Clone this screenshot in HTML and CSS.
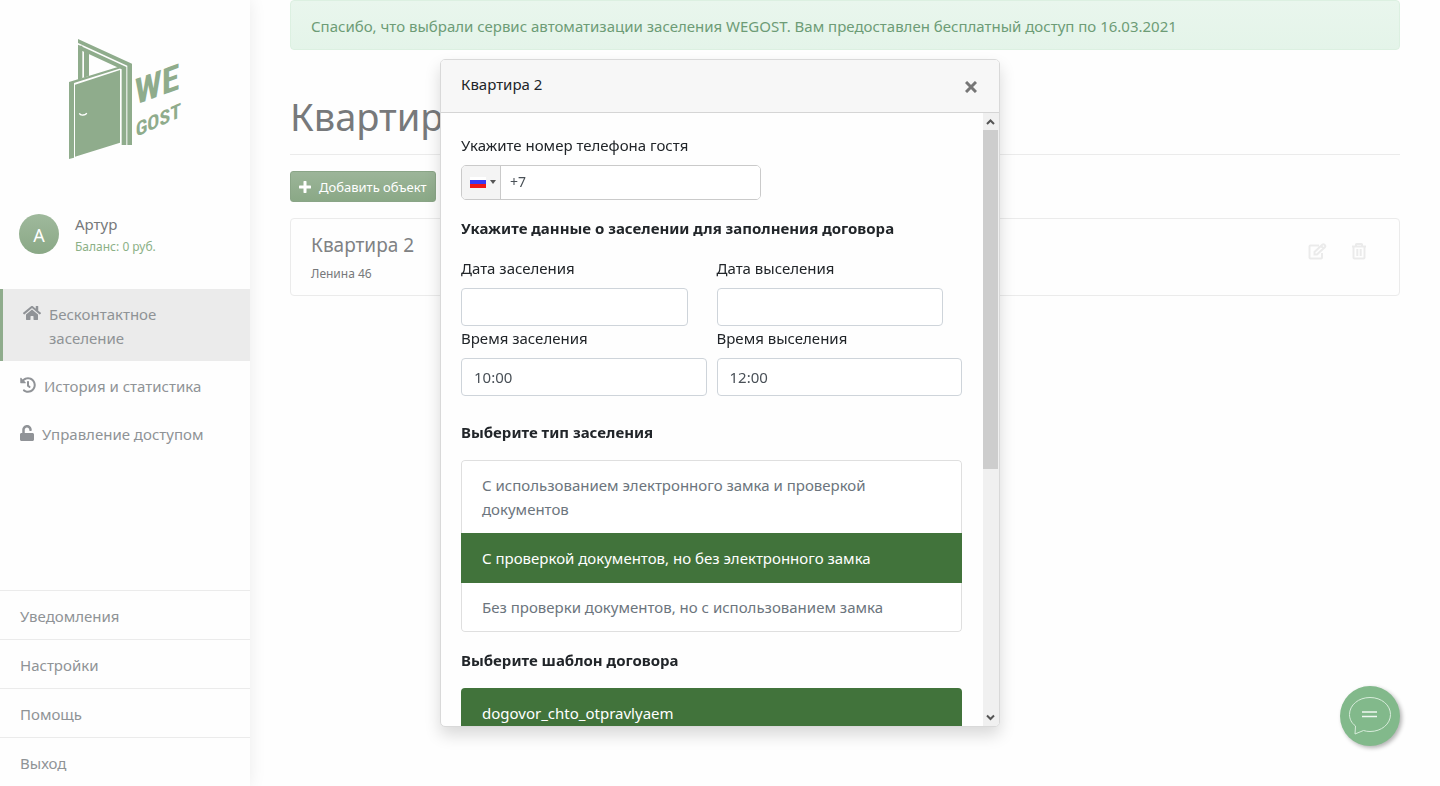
FILE: index.html
```html
<!DOCTYPE html>
<html lang="ru">
<head>
<meta charset="utf-8">
<meta name="viewport" content="width=device-width, initial-scale=1">
<title>WEGOST</title>
<link rel="stylesheet" href="styles.css">
</head>
<body>
<div class="app">
  <aside class="sidebar">
    <svg class="logo" viewBox="54 39 345 366" role="img" aria-label="WE GOST">
      <g class="logo-shape">
        <path d="M84 42 246 116V360H232V122L84 54Z"/>
        <path d="M84 59 229 126V360H215V133L84 72Z"/>
        <path d="M84 62H97V160L84 165ZM102 76 117 82V152L102 158Z"/>
        <path d="M57 171 206 125 212 130 72 174V398L57 402Z"/>
        <path d="M75 179 210 135V353L75 395Z"/>
      </g>
      <path class="logo-handle" d="M88 265Q91 271 99 270Q108 270 110 264"/>
      <g class="logo-text">
        <text class="logo-we" transform="translate(254 240) skewY(-20)">WE</text>
        <text class="logo-gost" transform="translate(257 336) skewY(-24)">GOST</text>
      </g>
    </svg>
    <div class="profile">
      <span class="avatar">А</span>
      <div class="profile-info">
        <div class="profile-name">Артур</div>
        <div class="balance">Баланс: 0 руб.</div>
      </div>
    </div>
    <nav class="nav">
      <a class="nav-item active" href="#">
        <svg class="nav-icon" width="18" height="16" viewBox="0 0 576 512"><path d="M280 148 96 300v164c0 9 7 16 16 16l112-1c9 0 16-7 16-15v-96c0-9 7-16 16-16h64c9 0 16 7 16 16v96c0 8 7 16 16 16l112 1c9 0 16-8 16-17V300L296 148c-5-4-11-4-16 0zM572 251l-84-69V44c0-7-5-12-12-12h-56c-7 0-12 5-12 12v72l-90-74c-17-14-43-14-60 0L4 251c-5 4-6 12-1 17l25 31c4 5 12 6 17 2L280 107c5-4 11-4 16 0l235 194c5 4 13 3 17-2l26-31c4-5 3-13-2-17z"/></svg>
        <span>Бесконтактное заселение</span>
      </a>
      <a class="nav-item" href="#">
        <svg class="nav-icon" width="16" height="16" viewBox="0 0 512 512"><path d="M504 255c0 137-111 249-248 249-59 0-114-21-156-56-11-9-12-26-2-36l11-11c9-9 23-10 33-2 31 25 71 40 114 40 101 0 183-82 183-183S357 73 256 73c-48 0-92 19-125 50l51 51c10 10 3 27-11 27H24c-9 0-16-7-16-16V38c0-14 17-21 27-11l50 49C129 34 190 8 256 8c137 0 248 111 248 247zM323 343l10-13c8-10 6-25-4-33l-41-32V152c0-13-11-24-24-24h-16c-13 0-24 11-24 24v144l65 50c11 9 26 7 34-3z"/></svg>
        <span>История и статистика</span>
      </a>
      <a class="nav-item" href="#">
        <svg class="nav-icon" width="14" height="16" viewBox="0 0 448 512"><path d="M400 256H152v-103c0-40 32-73 71-73 40 0 73 32 73 72v16c0 13 11 24 24 24h32c13 0 24-11 24-24v-16C376 68 307 0 223 0S72 70 72 154v102H48c-27 0-48 21-48 48v160c0 27 21 48 48 48h352c26 0 48-21 48-48V304c0-27-22-48-48-48z"/></svg>
        <span>Управление доступом</span>
      </a>
    </nav>
    <nav class="menu">
      <a href="#">Уведомления</a>
      <a href="#">Настройки</a>
      <a href="#">Помощь</a>
      <a href="#">Выход</a>
    </nav>
  </aside>

  <main class="main">
    <div class="alert">Спасибо, что выбрали сервис автоматизации заселения WEGOST. Вам предоставлен бесплатный доступ по 16.03.2021</div>
    <h1 class="title">Квартиры</h1>
    <button class="add" type="button">
      <svg width="12" height="12" viewBox="0 0 12 12"><path d="M6 1V11M1 6H11"/></svg>
      Добавить объект
    </button>
    <article class="card">
      <div>
        <h2 class="card-title">Квартира 2</h2>
        <div class="card-address">Ленина 46</div>
      </div>
      <div class="card-actions">
        <button type="button" aria-label="Изменить"><svg width="19" height="17" viewBox="0 0 19 17"><path d="M11 2.500H2.500Q1.500 2.500 1.500 3.500V14.500Q1.500 15.500 2.500 15.500H13Q14 15.500 14 14.500V10M6.500 11.500V9L14.500 1.500Q15.500 .8 16.500 1.700Q17.800 2.800 17 4L9 11.500ZM13 3 15.500 5.500"/></svg></button>
        <button type="button" aria-label="Удалить"><svg width="14" height="17" viewBox="0 0 14 17"><path d="M0 3.500H14M4 3V1.500Q4 1 4.500 1H9.500Q10 1 10 1.500V3M1.500 4V14.500Q1.500 15.500 2.500 15.500H11.500Q12.500 15.500 12.500 14.500V4M5.300 6V13M8.700 6V13"/></svg></button>
      </div>
    </article>
  </main>
</div>

<div class="overlay">
  <section class="modal" role="dialog" aria-labelledby="modal-title">
    <header class="modal-header">
      <span id="modal-title">Квартира 2</span>
      <button class="close" type="button" aria-label="Закрыть"><svg width="12" height="12" viewBox="0 0 12 12"><path d="M1 1 11 11M11 1 1 11"/></svg></button>
    </header>
    <div class="modal-main">
      <form class="modal-body">
        <label class="label label-phone" for="phone">Укажите номер телефона гостя</label>
        <div class="phone">
          <button class="phone-country" type="button" aria-label="Россия">
            <span class="flag"></span><span class="caret"></span>
          </button>
          <input id="phone" type="tel" value="+7">
        </div>
        <h3 class="section-title">Укажите данные о заселении для заполнения договора</h3>
        <div class="dates">
          <div class="field field-date"><label class="label" for="date-in">Дата заселения</label><input id="date-in" type="text"></div>
          <div class="field field-date"><label class="label" for="date-out">Дата выселения</label><input id="date-out" type="text"></div>
          <div class="field"><label class="label" for="time-in">Время заселения</label><input id="time-in" type="text" value="10:00"></div>
          <div class="field"><label class="label" for="time-out">Время выселения</label><input id="time-out" type="text" value="12:00"></div>
        </div>
        <h3 class="section-title section-type">Выберите тип заселения</h3>
        <div class="list">
          <button class="list-item" type="button">С использованием электронного замка и проверкой документов</button>
          <button class="list-item selected" type="button">С проверкой документов, но без электронного замка</button>
          <button class="list-item" type="button">Без проверки документов, но с использованием замка</button>
        </div>
        <h3 class="section-title">Выберите шаблон договора</h3>
        <div class="list">
          <button class="list-item selected" type="button">dogovor_chto_otpravlyaem</button>
        </div>
      </form>
      <div class="scrollbar" aria-hidden="true">
        <svg class="scroll-arrow" width="15" height="17" viewBox="0 0 15 17"><path d="M4 11 7.500 7.500 11 11"/></svg>
        <div class="scroll-track"><div class="scroll-thumb"></div></div>
        <svg class="scroll-arrow" width="15" height="17" viewBox="0 0 15 17"><path d="M4 6.500 7.500 10 11 6.500"/></svg>
      </div>
    </div>
  </section>
</div>

<button class="chat" type="button" aria-label="Чат">
  <svg width="60" height="60" viewBox="0 0 60 60"><path d="M15.500 40C11.500 37 9.500 33 9.500 28.500C9.500 19 18.500 11.500 30 11.500S50.500 19 50.500 28.500S41.500 45.500 30 45.500Q26.500 45.500 23.500 44.500L15 48Z"/><path class="chat-lines" d="M22 26H37M22 30.500H37"/></svg>
</button>
</body>
</html>
```
FILE: styles.css
```css
* { box-sizing: border-box; }

body {
  margin: 0;
  background: #fefefe;
  color: #212529;
  font-family: "Noto Sans", "Open Sans", sans-serif;
  font-size: 15px;
  line-height: 24px;
}

button, input { font: inherit; color: inherit; }
button { cursor: pointer; }
a { color: inherit; text-decoration: none; }

.app { display: flex; min-height: 100vh; }

/* Sidebar */
.sidebar {
  flex: 0 0 250px;
  height: 100vh;
  display: flex;
  flex-direction: column;
  background: #fefefe;
  box-shadow: 0 0 16px rgba(0, 0, 0, .08);
  color: #8f9396;
}

.logo {
  flex: none;
  width: 115px;
  height: 122px;
  margin: 38px 0 0 68px;
  overflow: visible;
}
.logo-shape, .logo-text { fill: #8fac8c; }
.logo-handle { fill: none; stroke: #fff; stroke-width: 4; }
.logo-text { font-family: "Roboto Condensed", "Open Sans Condensed", "Liberation Sans Narrow", "DejaVu Sans Condensed", sans-serif; font-weight: 700; }
.logo-we { font-size: 108px; }
.logo-gost { font-size: 60px; }

.profile {
  display: flex;
  gap: 16px;
  margin: 52px 0 0 19px;
}
.avatar {
  width: 40px;
  height: 40px;
  margin-top: 2px;
  border-radius: 50%;
  background: linear-gradient(#9fb99c, #8aa886);
  color: #fff;
  font-size: 18px;
  line-height: 42px;
  text-align: center;
}
.profile-name { color: #77797b; }
.balance { color: #8bb086; font-size: 12px; line-height: 22px; }

.nav { margin-top: 31px; }
.nav-item {
  display: flex;
  gap: 8px;
  padding: 13px 40px 11px 20px;
}
.nav-item.active {
  border-left: 3px solid #8fac8c;
  background: #ebebeb;
}
.nav-icon { flex: none; margin-top: 3px; fill: #909397; }

.menu { margin-top: auto; }
.menu a {
  display: block;
  padding: 13px 20px 11px;
  border-top: 1px solid #ebebeb;
}

/* Page content */
.main { flex: 1; min-width: 0; padding: 0 40px; }

.alert {
  padding: 13px 20px 11px;
  border: 1px solid #dcf0e1;
  border-radius: 4px;
  background: linear-gradient(#e9f6ed, #e4f4e9);
  color: #6d9c76;
}

.title {
  margin: 38px 0 16px;
  padding-bottom: 10px;
  border-bottom: 1px solid #ebebeb;
  color: #77797b;
  font-size: 38px;
  font-weight: 400;
  line-height: 56px;
}

.add {
  display: flex;
  align-items: center;
  gap: 8px;
  height: 31px;
  padding: 0 8px;
  border: 1px solid #8aa587;
  border-radius: 3px;
  background: linear-gradient(#9cb599, #8aa886);
  color: #fff;
  font-size: 13px;
}
.add svg { fill: none; stroke: #fff; stroke-width: 3; stroke-linecap: round; }

.card {
  display: flex;
  justify-content: space-between;
  margin-top: 16px;
  padding: 14px 33px 10px 20px;
  border: 1px solid #ebebeb;
  border-radius: 4px;
}
.card-title {
  margin: 0 0 6px;
  color: #808284;
  font-size: 19px;
  font-weight: 400;
  line-height: 24px;
}
.card-address { color: #77797b; font-size: 12px; line-height: 22px; }
.card-actions { display: flex; align-items: flex-start; gap: 25px; padding-top: 10px; }
.card-actions button { display: flex; padding: 0; border: 0; background: none; }
.card-actions svg { fill: none; stroke: #ebebeb; stroke-width: 2; }

/* Dialog */
.overlay {
  position: fixed;
  inset: 0;
  display: flex;
  align-items: center;
  justify-content: center;
}
.modal {
  display: flex;
  flex-direction: column;
  width: 560px;
  max-width: 100%;
  max-height: 85%;
  overflow: hidden;
  border: 1px solid #d9d9d9;
  border-radius: 5px;
  background: #fefefe;
  box-shadow: 0 8px 16px rgba(0, 0, 0, .15);
}
.modal-header {
  display: flex;
  align-items: center;
  justify-content: space-between;
  flex: none;
  padding: 12px 20px 16px;
  border-bottom: 1px solid #d5d5d5;
  background: #f7f7f7;
}
.close { display: flex; margin-top: 6px; padding: 2px; border: 0; background: none; }
.close svg { fill: none; stroke: #767676; stroke-width: 3; }

.modal-main { display: flex; flex: 1; min-height: 0; }
.modal-body {
  flex: 1;
  min-width: 0;
  padding: 20px;
  overflow-y: auto;
  scrollbar-width: none;
}
.label { display: block; margin-bottom: 8px; }

.phone {
  display: flex;
  width: 300px;
  height: 35px;
  border: 1px solid #cacaca;
  border-radius: 5px;
  overflow: hidden;
}
.phone-country {
  display: flex;
  align-items: center;
  gap: 4px;
  width: 39px;
  padding: 0 0 0 8px;
  border: 0;
  border-right: 1px solid #cacaca;
  background: #f4f4f4;
}
.flag {
  width: 16px;
  height: 11px;
  background: linear-gradient(#fff 30%, #3a3af5 30% 65%, #f01818 65%);
}
.caret {
  border: 3px solid transparent;
  border-top: 4px solid #555;
  border-bottom: 0;
}
.phone input {
  flex: 1;
  min-width: 0;
  padding: 0 9px;
  border: 0;
  background: #fff;
  color: #495057;
  font-size: 14px;
}

.section-title {
  margin: 16px 0;
  font-size: 15px;
  font-weight: 700;
  line-height: 24px;
}
.section-type { margin-top: 24px; }
.label-phone { padding-bottom: 0; }

.dates { display: grid; grid-template-columns: 1fr 1fr; column-gap: 10px; }
.field input {
  display: block;
  width: 100%;
  height: 38px;
  padding: 0 12px;
  border: 1px solid #ced4da;
  border-radius: 4px;
  background: #fff;
  color: #495057;
}
.field-date { padding-right: 19px; }

/* Outer items carry the frame so that a selected item fills it edge to edge */
.list {
  display: flex;
  flex-direction: column;
  overflow: hidden;
  border-radius: 4px;
}
.list-item {
  padding: 12px 20px;
  border: 1px solid #dfdfdf;
  border-width: 0 1px;
  background: #fff;
  color: #6c757d;
  text-align: left;
}
.list-item:first-child { border-top-width: 1px; border-radius: 4px 4px 0 0; }
.list-item:last-child { border-bottom-width: 1px; border-radius: 0 0 4px 4px; }
.list-item.selected {
  border-width: 1px;
  border-color: #41733b;
  background: #41733b;
  color: #fff;
}

.scrollbar {
  display: flex;
  flex-direction: column;
  flex: 0 0 17px;
  padding-right: 1px;
  border-left: 1px solid #fefefe;
  background: #f0f0f0;
}
.scroll-arrow { flex: none; fill: none; stroke: #555; stroke-width: 2; }
.scroll-track { flex: 1; }
.scroll-thumb { height: 58.5%; background: #cdcdcd; }

/* Chat launcher */
.chat {
  position: fixed;
  right: 40px;
  bottom: 40px;
  width: 60px;
  height: 60px;
  padding: 0;
  border: 0;
  border-radius: 50%;
  background: #82b98b;
  box-shadow: 2px 2px 4px rgba(0, 0, 0, .3);
}
.chat svg { display: block; fill: none; stroke: #d8ecdb; stroke-width: 1; }
.chat .chat-lines { stroke: #f0f8f1; stroke-width: 1.500; }
```
